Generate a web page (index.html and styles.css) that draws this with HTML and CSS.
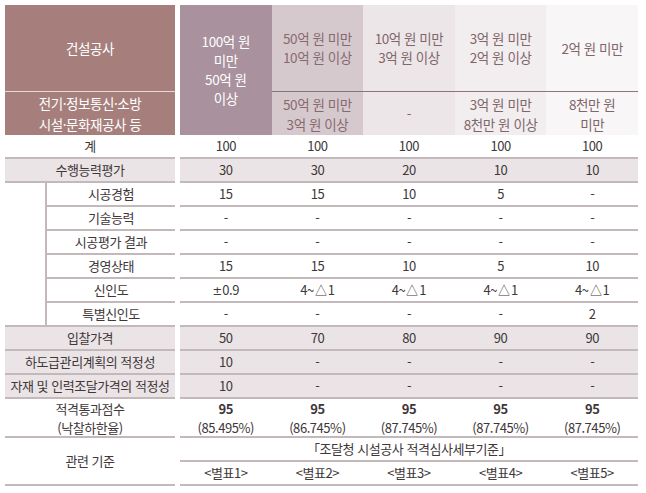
FILE: index.html
```html
<!DOCTYPE html>
<html lang="ko">
<head>
<meta charset="utf-8">
<link rel="stylesheet" href="styles.css">
</head>
<body>
<div class="table">
  <div class="head">
    <div class="hleft">
      <div class="h1">건설공사</div>
      <div class="h2">전기·정보통신·소방<br>시설·문화재공사 등</div>
    </div>
    <div class="hdata">
      <div class="hcol c1"><div class="hfull">100억 원<br>미만<br>50억 원<br>이상</div></div>
      <div class="hcol c2"><div class="h1">50억 원 미만<br>10억 원 이상</div><div class="h2">50억 원 미만<br>3억 원 이상</div></div>
      <div class="hcol c3"><div class="h1">10억 원 미만<br>3억 원 이상</div><div class="h2">-</div></div>
      <div class="hcol c4"><div class="h1">3억 원 미만<br>2억 원 이상</div><div class="h2">3억 원 미만<br>8천만 원 이상</div></div>
      <div class="hcol c5"><div class="h1">2억 원 미만</div><div class="h2">8천만 원<br>미만</div></div>
    </div>
  </div>

  <div class="row">
    <div class="lbl">계</div>
    <div class="vals"><span>100</span><span>100</span><span>100</span><span>100</span><span>100</span></div>
  </div>
  <div class="row shade">
    <div class="lbl">수행능력평가</div>
    <div class="vals"><span>30</span><span>30</span><span>20</span><span>10</span><span>10</span></div>
  </div>
  <div class="row sub">
    <div class="lbl"><div class="sublbl">시공경험</div></div>
    <div class="vals"><span>15</span><span>15</span><span>10</span><span>5</span><span>-</span></div>
  </div>
  <div class="row sub">
    <div class="lbl"><div class="sublbl">기술능력</div></div>
    <div class="vals"><span>-</span><span>-</span><span>-</span><span>-</span><span>-</span></div>
  </div>
  <div class="row sub">
    <div class="lbl"><div class="sublbl">시공평가 결과</div></div>
    <div class="vals"><span>-</span><span>-</span><span>-</span><span>-</span><span>-</span></div>
  </div>
  <div class="row sub">
    <div class="lbl"><div class="sublbl">경영상태</div></div>
    <div class="vals"><span>15</span><span>15</span><span>10</span><span>5</span><span>10</span></div>
  </div>
  <div class="row sub">
    <div class="lbl"><div class="sublbl">신인도</div></div>
    <div class="vals"><span><p class="ln"><em class="g">±</em>0.9</p></span><span><p class="ln">4~<em class="g t">△</em>1</p></span><span><p class="ln">4~<em class="g t">△</em>1</p></span><span><p class="ln">4~<em class="g t">△</em>1</p></span><span><p class="ln">4~<em class="g t">△</em>1</p></span></div>
  </div>
  <div class="row sub last">
    <div class="lbl"><div class="sublbl">특별신인도</div></div>
    <div class="vals"><span>-</span><span>-</span><span>-</span><span>-</span><span>2</span></div>
  </div>
  <div class="row shade">
    <div class="lbl">입찰가격</div>
    <div class="vals"><span>50</span><span>70</span><span>80</span><span>90</span><span>90</span></div>
  </div>
  <div class="row shade">
    <div class="lbl">하도급관리계획의 적정성</div>
    <div class="vals"><span>10</span><span>-</span><span>-</span><span>-</span><span>-</span></div>
  </div>
  <div class="row shade">
    <div class="lbl">자재 및 인력조달가격의 적정성</div>
    <div class="vals"><span>10</span><span>-</span><span>-</span><span>-</span><span>-</span></div>
  </div>
  <div class="row pass">
    <div class="lbl">적격통과점수<br>(낙찰하한율)</div>
    <div class="vals">
      <span><b>95</b><i>(85.495%)</i></span>
      <span><b>95</b><i>(86.745%)</i></span>
      <span><b>95</b><i>(87.745%)</i></span>
      <span><b>95</b><i>(87.745%)</i></span>
      <span><b>95</b><i>(87.745%)</i></span>
    </div>
  </div>
  <div class="row ref">
    <div class="lbl">관련 기준</div>
    <div class="refvals">
      <div class="reftop">「조달청 시설공사 적격심사세부기준」</div>
      <div class="vals"><span>&lt;별표1&gt;</span><span>&lt;별표2&gt;</span><span>&lt;별표3&gt;</span><span>&lt;별표4&gt;</span><span>&lt;별표5&gt;</span></div>
    </div>
  </div>
</div>
</body>
</html>
```

FILE: styles.css
```css
* { box-sizing: border-box; }
html, body { margin: 0; padding: 0; background: #fff; }
body {
  font-family: "Noto Sans CJK KR", "Noto Sans", sans-serif;
  font-size: 13px;
  letter-spacing: -0.45px;
  color: #403739;
}
.table { width: 633px; margin: 5px 0 0 5px; }

.head { display: flex; gap: 5px; height: 130px; font-size: 13.5px; line-height: 19px; }
.hleft { width: 170px; background: #a67f7d; color: #fff; display: flex; flex-direction: column; }
.hleft .h2 { border-top: 1px solid #e6d8d7; line-height: 21px; }
.hdata { flex: 1; display: flex; }
.hcol { flex: 1; display: flex; flex-direction: column; color: #7f6669; }
.h1 { height: 86px; display: flex; align-items: center; justify-content: center; text-align: center; }
.h2 { flex: 1; display: flex; align-items: center; justify-content: center; text-align: center; border-top: 1px solid #8e7478; line-height: 20px; }
.hfull { flex: 1; display: flex; align-items: center; justify-content: center; text-align: center; }
.c1 { background: #a9919d; color: #fff; }
.c2 { background: #d6c9ce; color: #86696f; }
.c3 { background: #ece6e9; }
.c4 { background: #f2eef0; }
.c5 { background: #f8f6f7; }

.row { display: flex; gap: 5px; height: 24px; line-height: 18px; }
.lbl { width: 170px; display: flex; align-items: center; justify-content: center; text-align: center; border-bottom: 2px solid #c3b8ba; white-space: nowrap; }
.vals { flex: 1; display: flex; border-bottom: 2px solid #c3b8ba; }
.vals span { flex: 1; display: flex; flex-direction: column; align-items: center; justify-content: center; text-align: center; }
.ln { margin: 0; }
.g { font-style: normal; font-family: "DejaVu Sans", sans-serif; font-size: 11.5px; letter-spacing: 0; }
.g.t { font-size: 14px; font-weight: 300; }
.shade .lbl, .shade .vals { background: #ebe4e6; }

.sub .lbl { border-bottom: none; padding-left: 40px; align-items: stretch; }
.sublbl { flex: 1; display: flex; align-items: center; justify-content: center; border-left: 2px solid #c3b8ba; border-bottom: 2px solid #c3b8ba; }
.sub.last .lbl { border-bottom: 2px solid #c3b8ba; }
.sub.last .sublbl { border-bottom: none; }

.pass { height: 39px; line-height: 19px; }
.pass b { font-weight: 700; display: block; }
.pass i { font-style: normal; display: block; }
.ref { height: 48px; }
.refvals { flex: 1; display: flex; flex-direction: column; }
.reftop { height: 24px; display: flex; align-items: center; justify-content: center; border-bottom: 2px solid #c3b8ba; }
.refvals .vals { height: 24px; flex: none; }
```
